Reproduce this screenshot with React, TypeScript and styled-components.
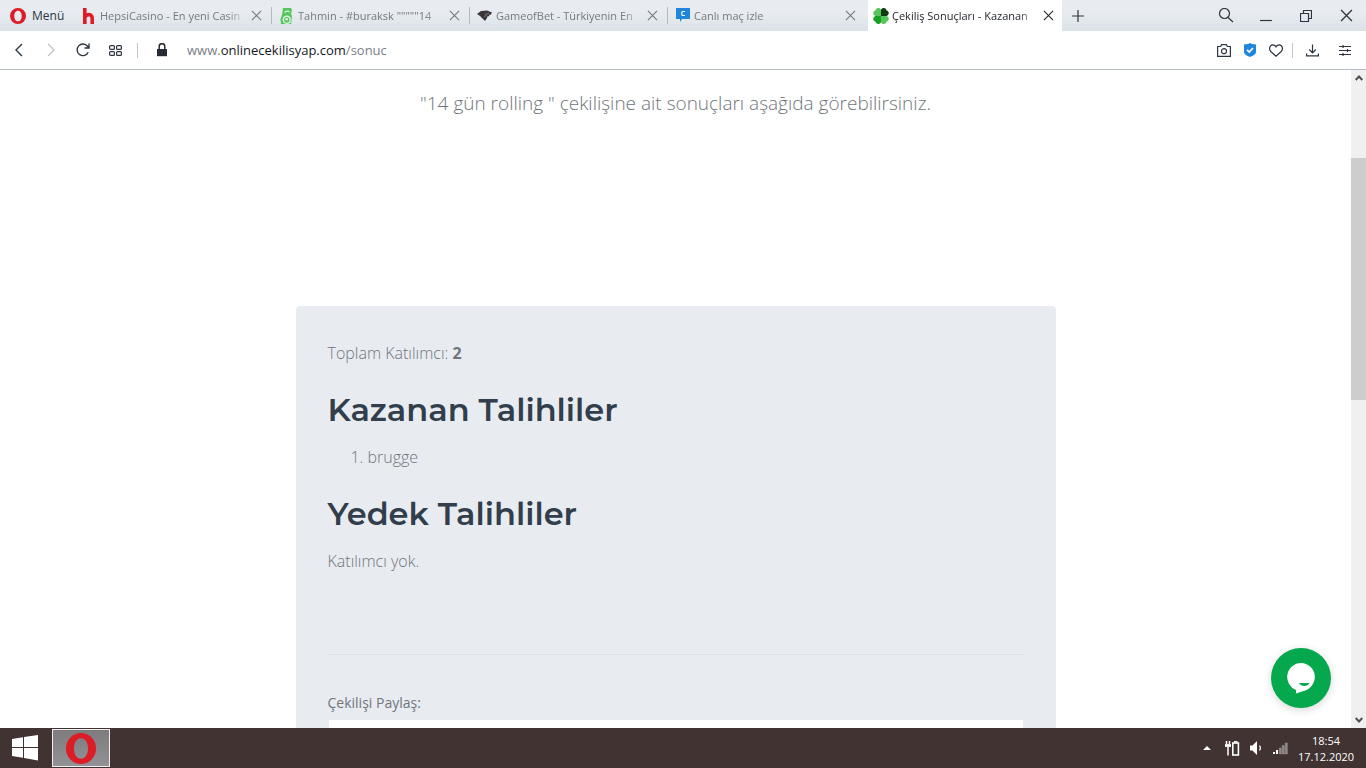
import React from "react";
import styled, { createGlobalStyle } from "styled-components";

const ui = `"Open Sans", "Noto Sans", sans-serif`;

const GlobalStyle = createGlobalStyle`
  *, *::before, *::after { box-sizing: border-box; }
  html, body { margin: 0; padding: 0; overflow: hidden; }
  body { background: #fff; font-family: ${ui}; }
  button { font: inherit; color: inherit; background: none; border: 0; padding: 0; margin: 0; cursor: pointer; }
  svg { display: block; flex: none; }
`;

const Desktop = styled.div`
  display: flex;
  flex-direction: column;
  height: 100vh;
`;

/* Browser chrome */

const TabBar = styled.header`
  display: flex;
  flex: none;
  height: 31px;
  background: linear-gradient(#e8ecf0 40%, #dbe2e8);
  font-size: 11px;
  color: #2f3640;
`;

const MenuButton = styled.button`
  display: flex;
  align-items: center;
  gap: 6px;
  width: 74px;
  padding-left: 10px;
  font-size: 12px;
`;

const Tab = styled.div<{ $active?: boolean }>`
  display: flex;
  align-items: center;
  flex: 0 1 ${(p) => (p.$active ? 194 : 198)}px;
  min-width: 0;
  margin-left: ${(p) => (p.$active ? 2 : 0)}px;
  padding: 0 ${(p) => (p.$active ? 8 : 10)}px 0 ${(p) => (p.$active ? 5 : 7)}px;
  gap: 3px;
  background: ${(p) => (p.$active ? "#fff" : "transparent")};
  color: ${(p) => (p.$active ? "#23272e" : "#757a81")};
`;

const TabDivider = styled.span`
  flex: none;
  align-self: center;
  width: 1px;
  height: 17px;
  margin-left: -1px;
  background: #b4bac0;
`;

const TabTitle = styled.button`
  flex: 1;
  min-width: 0;
  overflow: hidden;
  white-space: nowrap;
  text-align: left;
  line-height: 18px;
  mask-image: linear-gradient(to right, #000 calc(100% - 20px), transparent);
`;

const TabClose = styled.button`
  display: flex;
  align-items: center;
  justify-content: center;
  flex: none;
  width: 12px;
  height: 18px;
`;

const Spacer = styled.div`
  flex: 1;
`;

const BarButton = styled.button<{ $w: number }>`
  display: flex;
  align-items: center;
  justify-content: center;
  flex: none;
  width: ${(p) => p.$w}px;
  color: #2f3640;
`;

const AddressBar = styled.nav`
  display: flex;
  align-items: stretch;
  flex: none;
  height: 39px;
  padding: 0 5px 0 3px;
  background: #fff;
  border-bottom: 1px solid #b4bdc6;
  color: #343b47;
`;

const BarDivider = styled.span`
  flex: none;
  align-self: center;
  width: 1px;
  height: 15px;
  margin: 0 6px;
  background: #c3c7cc;
`;

const UrlField = styled.div`
  display: flex;
  align-items: center;
  flex: 1;
  gap: 19px;
  padding-left: 12px;
`;

const Url = styled.span`
  font-size: 13px;
  line-height: 20px;
  color: #7b8087;
  b { font-weight: 400; color: #15181c; }
`;

/* Page */

const Viewport = styled.div`
  display: flex;
  position: relative;
  flex: 1;
  min-height: 0;
`;

const Page = styled.main`
  flex: 1;
  min-width: 0;
  overflow: hidden;
  padding: 18px 16px 0;
  font-weight: 300;
  color: #70757a;
`;

const Intro = styled.p`
  margin: 0 0 188px;
  font-size: 19px;
  line-height: 30px;
  text-align: center;
`;

const Card = styled.section`
  max-width: 760px;
  margin: 0 auto;
  padding: 32px;
  border-radius: 4px;
  background: #e8ecf1;
  font-size: 16px;
  line-height: 30px;
`;

const Text = styled.p`
  margin: 0;
  b { font-weight: 700; }
`;

const Heading = styled.h2`
  margin: 21px 0 11px;
  font-family: Montserrat, Inter, sans-serif;
  font-size: 32px;
  font-weight: 600;
  line-height: 42px;
  color: #323e4c;
`;

const Winners = styled.ol`
  margin: 0;
  padding-left: 40px;
`;

const Rule = styled.hr`
  height: 1px;
  margin: 78px 0 36px;
  border: 0;
  background: #dee2e6;
`;

const ShareLabel = styled.label`
  display: block;
  font-size: 14px;
  font-weight: 400;
  line-height: 24px;
`;

const ShareInput = styled.input`
  display: block;
  width: 100%;
  height: 48px;
  margin-top: 4px;
  border: 1px solid #e8ecf1;
  background: #fff;
`;

const ScrollBar = styled.div`
  display: flex;
  flex-direction: column;
  flex: none;
  width: 15px;
  background: #f0f0f0;
`;

const ScrollArrow = styled.button`
  display: flex;
  align-items: center;
  justify-content: center;
  height: 16px;
  color: #505050;
`;

const ScrollPart = styled.div<{ $grow: number; $thumb?: boolean }>`
  flex: ${(p) => p.$grow} 1 0;
  background: ${(p) => (p.$thumb ? "#cdcdcd" : "transparent")};
`;

const ChatButton = styled.button`
  position: absolute;
  right: 35px;
  bottom: 20px;
  display: flex;
  align-items: center;
  justify-content: center;
  width: 60px;
  height: 60px;
  border-radius: 50%;
  background: #06a84e;
  box-shadow: 0 2px 8px rgba(0, 0, 0, 0.16);
`;

/* Taskbar */

const TaskBar = styled.footer`
  display: flex;
  flex: none;
  height: 40px;
  padding-right: 8px;
  background: #403332;
  color: #fff;
`;

const StartButton = styled.button`
  display: flex;
  align-items: center;
  justify-content: center;
  width: 52px;
  padding-right: 2px;
`;

const AppButton = styled.button`
  display: flex;
  align-items: center;
  justify-content: center;
  width: 58px;
  height: 38px;
  margin-top: 1px;
  border: 1px solid #f0f0f2;
  background: linear-gradient(#7d7b7d, #929195);
`;

const TrayButton = styled(BarButton)`
  color: #fff;
`;

const Clock = styled.time`
  display: flex;
  flex-direction: column;
  align-items: center;
  justify-content: center;
  width: 64px;
  padding-top: 2px;
  font-size: 11px;
  line-height: 16px;
`;

const OperaO = ({ w, h }: { w: number; h: number }) => (
  <svg width={w} height={h} viewBox="0 0 30 30" preserveAspectRatio="none">
    <path fill="#dc1c26" fillRule="evenodd" d="M15 0a15 15 0 1 0 0 30a15 15 0 1 0 0-30zM15 5c4.500 0 7 4.500 7 10s-2.500 10-7 10s-7-4.500-7-10s2.500-10 7-10z" />
  </svg>
);

const Cross = ({ size }: { size: number }) => (
  <svg width={size} height={size} viewBox="0 0 12 12" fill="none" stroke="currentColor" strokeWidth="1.2">
    <path d="M1 1l10 10M11 1L1 11" />
  </svg>
);

const HepsiIcon = () => (
  <svg width="16" height="18" viewBox="0 0 16 18" fill="none" stroke="#dc1c26" strokeWidth="3.600">
    <path d="M3.800 1v16M3.800 11c0-4 7.400-5 7.400 0v6" />
  </svg>
);

const TahminIcon = () => (
  <svg width="16" height="18" viewBox="0 0 16 18">
    <path fill="#56c65c" d="M4 1h8l1 2-1 4 1 2-1 8H2l-.500-5L3 8z" />
    <path d="M10.500 15.200A3.600 3.600 0 1 1 11 11v4.500" fill="none" stroke="#e8f6ea" strokeWidth="1.300" />
    <circle cx="7.700" cy="12.300" r="1.300" fill="#e8f6ea" />
    <path d="M5.500 5.500q2.500-2.500 5-.500" fill="none" stroke="#e8f6ea" strokeWidth="1.300" />
  </svg>
);

const GameIcon = () => (
  <svg width="16" height="18" viewBox="0 0 16 18">
    <path fill="#3a3638" d="M0 7l4-3 6-.500 5 2L13.500 8l-1-.500-.500 2-1.200-.500-.800 2L8 14l-2-2-3-3z" />
    <path d="M8 7.500l4-1.200M7 9.500l2.500-1" stroke="#8d8a8c" strokeWidth=".800" />
  </svg>
);

const CanliIcon = () => (
  <svg width="16" height="18" viewBox="0 0 16 18">
    <path fill="#1f86dc" d="M1 1h14v11H7l-2 3v-3H1z" />
    <path d="M10 4.500H7.500L6.800 5.200v2.600l.700.700H10" fill="none" stroke="#fff" strokeWidth="1.100" />
  </svg>
);

const CloverIcon = () => (
  <svg width="16" height="18" viewBox="0 0 16 18">
    <path fill="#55c45a" d="M8 9H2.500C-.500 8-.500 4 2.500 3.500c0-3 4.500-3.500 5.500-.500z" />
    <path fill="#0e3b12" d="M8 9V3c1-3 5.500-2.500 5.500.500 3 .500 3 4.500 0 5.500z" />
    <path fill="#18a024" d="M8 9v6c-1 3-5.500 2.500-5.500-.500-3-.500-3-4.500 0-5.500z" />
    <path fill="#55c45a" d="M8 9h5.500c3 1 3 5 0 5.500 0 3-4.500 3.500-5.500.500z" />
  </svg>
);

const tabs = [
  { title: "HepsiCasino - En yeni Casin", icon: <HepsiIcon /> },
  { title: `Tahmin - #buraksk """""14`, icon: <TahminIcon /> },
  { title: "GameofBet - Türkiyenin En", icon: <GameIcon /> },
  { title: "Canlı maç izle", icon: <CanliIcon /> },
  { title: "Çekiliş Sonuçları - Kazanan", icon: <CloverIcon />, active: true },
];

const line = { fill: "none", stroke: "currentColor", strokeWidth: 1.2 } as const;

export default function App() {
  return (
    <Desktop>
      <GlobalStyle />
      <TabBar>
        <MenuButton>
          <OperaO w={16} h={16} />
          Menü
        </MenuButton>
        {tabs.map((t, i) => (
          <React.Fragment key={t.title}>
            <Tab $active={t.active}>
              {t.icon}
              <TabTitle>{t.title}</TabTitle>
              <TabClose aria-label="Sekmeyi kapat">
                <Cross size={11} />
              </TabClose>
            </Tab>
            {i < 3 && <TabDivider />}
          </React.Fragment>
        ))}
        <BarButton $w={31} aria-label="Yeni sekme">
          <svg width="12" height="12" viewBox="0 0 12 12" {...line}><path d="M6 0v12M0 6h12" /></svg>
        </BarButton>
        <Spacer />
        <BarButton $w={40} aria-label="Ara">
          <svg width="16" height="16" viewBox="0 0 16 16" {...line}><circle cx="6.500" cy="5.500" r="5" /><path d="M10 9.500l5 4.500" /></svg>
        </BarButton>
        <BarButton $w={40} aria-label="Simge durumuna küçült">
          <svg width="12" height="12" viewBox="0 0 12 12" {...line}><path d="M0 10.500h12" /></svg>
        </BarButton>
        <BarButton $w={40} aria-label="Geri yükle">
          <svg width="12" height="12" viewBox="0 0 12 12" {...line}><path d="M.500 3.500h8v8h-8zM3.500 3.500v-3h8v8h-3" /></svg>
        </BarButton>
        <BarButton $w={40} aria-label="Kapat"><Cross size={13} /></BarButton>
      </TabBar>

      <AddressBar>
        <BarButton $w={32} aria-label="Geri">
          <svg width="8" height="14" viewBox="0 0 8 14" {...line} strokeWidth={1.4}><path d="M7 1L1 7l6 6" /></svg>
        </BarButton>
        <BarButton $w={32} aria-label="İleri">
          <svg width="8" height="14" viewBox="0 0 8 14" fill="none" stroke="#c0c4c9" strokeWidth="1.300"><path d="M1 1l6 6-6 6" /></svg>
        </BarButton>
        <BarButton $w={32} aria-label="Yenile">
          <svg width="14" height="14" viewBox="0 0 14 14" {...line} strokeWidth={1.4}><path d="M12.200 9.200A5.800 5.800 0 1 1 11.500 3.300L13 5M13 .500V5H8.500" /></svg>
        </BarButton>
        <BarButton $w={32} aria-label="Hızlı erişim">
          <svg width="13" height="11" viewBox="0 0 13 11" {...line}><rect x=".600" y=".600" width="4.800" height="3.800" rx="1" /><rect x="7.600" y=".600" width="4.800" height="3.800" rx="1" /><rect x=".600" y="6.600" width="4.800" height="3.800" rx="1" /><rect x="7.600" y="6.600" width="4.800" height="3.800" rx="1" /></svg>
        </BarButton>
        <BarDivider />
        <UrlField>
          <svg width="12" height="14" viewBox="0 0 12 14"><path fill="#262b36" d="M1 6h10v7.200H1z" /><path d="M3.200 6V3.500a2.800 2.800 0 0 1 5.600 0V6" fill="none" stroke="#262b36" strokeWidth="1.500" /></svg>
          <Url>www.<b>onlinecekilisyap.com</b>/sonuc</Url>
        </UrlField>
        <BarButton $w={26} aria-label="Ekran görüntüsü">
          <svg width="14" height="13" viewBox="0 0 14 13" {...line}><path d="M.600 2.500h3L4.700.600h4.600l1.100 1.900h3v9.900H.600z" /><circle cx="7" cy="7.200" r="2.500" /></svg>
        </BarButton>
        <BarButton $w={26} aria-label="Güvenlik">
          <svg width="12" height="14" viewBox="0 0 12 14"><path fill="#1f86dc" d="M6 0l2 1 4 .500V9c0 2-3 4-6 5-3-1-6-3-6-5V1.500L4 1z" /><path d="M3 6.800l2.200 2.200L9 5" fill="none" stroke="#fff" strokeWidth="1.700" /></svg>
        </BarButton>
        <BarButton $w={26} aria-label="Yer imi ekle">
          <svg width="14" height="13" viewBox="0 0 14 13" {...line}><path d="M7 12.200L1.800 7.500C-.500 5 .800.800 3.800.800 5.500.800 6.500 1.800 7 2.800 7.500 1.800 8.500.800 10.200.800c3 0 4.300 4.200 2 6.700z" /></svg>
        </BarButton>
        <BarButton $w={6} as="span"><BarDivider /></BarButton>
        <BarButton $w={34} aria-label="İndirilenler">
          <svg width="13" height="13" viewBox="0 0 13 13" {...line}><path d="M6.500.500v8M3.200 5.500l3.300 3.300 3.300-3.300M.600 9.500v2.400h11.800V9.500" /></svg>
        </BarButton>
        <BarButton $w={32} aria-label="Kolay kurulum">
          <svg width="12" height="11" viewBox="0 0 12 11" {...line}><path d="M0 1.500h12M0 5.500h12M0 9.500h12M4 0v3M8.500 4v3M4 8v3" /></svg>
        </BarButton>
      </AddressBar>

      <Viewport>
        <Page>
          <Intro>"14 gün rolling " çekilişine ait sonuçları aşağıda görebilirsiniz.</Intro>
          <Card>
            <Text>Toplam Katılımcı: <b>2</b></Text>
            <Heading>Kazanan Talihliler</Heading>
            <Winners><li>brugge</li></Winners>
            <Heading>Yedek Talihliler</Heading>
            <Text>Katılımcı yok.</Text>
            <Rule />
            <ShareLabel htmlFor="share">Çekilişi Paylaş:</ShareLabel>
            <ShareInput id="share" type="text" readOnly />
          </Card>
        </Page>
        <ScrollBar>
          <ScrollArrow aria-label="Yukarı kaydır">
            <svg width="8" height="6" viewBox="0 0 8 6" fill="none" stroke="currentColor" strokeWidth="2"><path d="M.700 5L4 1.500 7.300 5" /></svg>
          </ScrollArrow>
          <ScrollPart $grow={72} />
          <ScrollPart $grow={242} $thumb />
          <ScrollPart $grow={312} />
          <ScrollArrow aria-label="Aşağı kaydır">
            <svg width="8" height="6" viewBox="0 0 8 6" fill="none" stroke="currentColor" strokeWidth="2"><path d="M.700 1L4 4.500 7.300 1" /></svg>
          </ScrollArrow>
        </ScrollBar>
        <ChatButton aria-label="Canlı destek">
          <svg width="30" height="32" viewBox="0 0 30 32">
            <path fill="#fff" d="M15 1a14 14 0 0 1 13.800 14.500C28.500 22 24 27 18.500 28.800L10 31.500V28A14 14 0 0 1 15 1z" />
            <path fill="#06a84e" d="M13 21h10.500c-1.500 3.800-8.500 4-10.500 0z" />
          </svg>
        </ChatButton>
      </Viewport>

      <TaskBar>
        <StartButton aria-label="Başlat">
          <svg width="26" height="26" viewBox="0 0 26 26" fill="#fff"><path d="M0 4l11-1.700V12H0zM12 2.100L26 0v12H12zM0 13h11v9.700L0 21zM12 13h14v12.500L12 23z" /></svg>
        </StartButton>
        <AppButton aria-label="Opera"><OperaO w={30} h={31} /></AppButton>
        <Spacer />
        <TrayButton $w={24} aria-label="Gizli simgeler">
          <svg width="8" height="4" viewBox="0 0 8 4"><path fill="#fff" d="M4 0l4 4H0z" /></svg>
        </TrayButton>
        <TrayButton $w={26} aria-label="Pil">
          <svg width="15" height="15" viewBox="0 0 15 15" fill="none" stroke="#fff"><path strokeWidth="1.500" d="M1.500 0v3M4.500 0v3M3 6v8.500" /><path strokeWidth="2.800" d="M0 4.500h6" /><rect x="7.800" y="2" width="5.600" height="12" strokeWidth="1.600" /><path strokeWidth="1.500" d="M9 .800h3.500" /></svg>
        </TrayButton>
        <TrayButton $w={23} aria-label="Ses">
          <svg width="13" height="14" viewBox="0 0 13 14"><path fill="#fff" d="M0 4.500h2.500L7 0v14L2.500 9.500H0z" /><path d="M9.500 4.500q1.800 2.500 0 5" fill="none" stroke="#fff" strokeWidth="1.200" /></svg>
        </TrayButton>
        <TrayButton $w={26} aria-label="Ağ">
          <svg width="16" height="13" viewBox="0 0 16 13"><path fill="#fff" d="M0 10h2v2H0zM3 8h2v4H3z" /><path fill="#8c8483" stroke="#a59e9d" strokeWidth=".500" d="M6.300 6h2v6h-2zM9.300 3.500h2V12h-2zM12.300 1h2v11h-2z" /></svg>
        </TrayButton>
        <Clock>
          <span>18:54</span>
          <span>17.12.2020</span>
        </Clock>
      </TaskBar>
    </Desktop>
  );
}
